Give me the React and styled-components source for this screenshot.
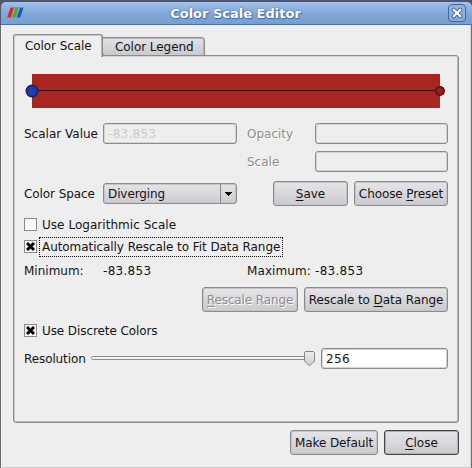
import React from "react";
import styled, { createGlobalStyle, css } from "styled-components";

const GlobalStyle = createGlobalStyle`
  * { box-sizing: border-box; }
  html, body { margin: 0; padding: 0; overflow: hidden; background: #4d5571; }
`;

const Window = styled.div`
  width: 472px;
  height: 468px;
  padding-top: 2px;
  background: #4d5571;
  font-family: "DejaVu Sans", sans-serif;
  font-size: 12px;
  line-height: 14px;
  color: #141414;
  white-space: nowrap;
`;

const TitleBar = styled.header`
  height: 23px;
  display: grid;
  grid-template-columns: 24px 1fr 24px;
  align-items: center;
  padding: 0 0 0 6px;
  margin-left: 1px;
  border-radius: 5px 5px 0 0;
  border-bottom: 1px solid #4a70a8;
  background: linear-gradient(#a4c2ec 0, #95b6e2 20%, #7fa4d6 60%, #799fd1 100%);
`;

const Title = styled.h1`
  margin: 1px 0 0 -8px;
  text-align: center;
  font-size: 13px;
  line-height: 16px;
  font-weight: bold;
  color: #fff;
  text-shadow: 0 0 1px #456fa8, 1px 1px 1px #456fa8, 0 0 2px #5b84bd;
`;

const CloseBox = styled.button`
  width: 18px;
  height: 18px;
  padding: 0;
  display: grid;
  place-items: center;
  border: 1px solid #3f6698;
  border-radius: 4px;
  background: linear-gradient(#94b7e3, #7da5d8);
  box-shadow: inset 0 0 0 1px #8fb2e0;
`;

const Body = styled.main`
  height: 443px;
  padding: 9px 12px 0 11px;
  background: #eeeeee;
  border-left: 1px solid #6e6969;
  border-right: 1px solid #6f6f6f;
  box-shadow: inset 1px 0 #f8f4f2, inset -1px 0 #d5d3d0, inset 0 -1px #c9c9c9;
`;

const TabList = styled.div`
  display: flex;
  align-items: flex-start;
  height: 22px;
  padding-left: 1px;
  margin-bottom: -1px;
`;

const Tab = styled.div`
  display: flex;
  border: 1px solid #8b8b8b;
  ${(p) =>
    p.$active
      ? css`
          width: 90px;
          height: 23px;
          padding: 4px 0 0 11px;
          border-bottom: 0;
          border-radius: 3px 3px 0 0;
          background: #eeeeee;
          box-shadow: inset 1px 1px #c9c9c9, inset -1px 0 #b5b5b5;
          z-index: 1;
        `
      : css`
          width: 103px;
          height: 19px;
          margin: 3px 0 0 -1px;
          padding: 2px 0 0 12px;
          border-radius: 0 3px 0 3px;
          background: linear-gradient(#e2e2e8, #c9c9ce);
          box-shadow: inset -1px 1px #b9b9bb;
        `}
`;

const Panel = styled.section`
  width: 446px;
  height: 368px;
  margin-left: 1px;
  padding: 18px 10px 0;
  border: 1px solid #8b8b8b;
  border-radius: 0 3px 3px 3px;
  box-shadow: inset 1px 0 #c9c9c9, inset -1px -1px #b9b9b9, inset 0 1px #d4d4d4;
`;

const Ramp = styled.svg`
  display: block;
  width: 424px;
  height: 34px;
  overflow: visible;
`;

const Row = styled.div`
  display: flex;
  align-items: center;
  height: ${(p) => p.$h}px;
  margin-top: ${(p) => p.$top || 0}px;
`;

const ButtonGroup = styled.div`
  display: flex;
  gap: 6px;
  margin-left: auto;
`;

const FormGrid = styled.div`
  display: grid;
  grid-template-columns: 79px 134px 10px 68px 133px;
  grid-auto-rows: 21px;
  row-gap: 7px;
  align-items: center;
  margin-top: 15px;
`;

const Text = styled.span`
  display: block;
  letter-spacing: ${(p) => p.$track || 0}px;
  ${(p) => p.$off && "color: #8d8d8d; text-shadow: 1px 1px #fff;"}
  ${(p) => p.$w && `width: ${p.$w}px;`}
  ${(p) => p.$col && `grid-column: ${p.$col};`}
`;

const Key = styled.span`
  text-decoration: underline;
  text-decoration-thickness: 1px;
  text-underline-offset: 2px;
  text-decoration-skip-ink: none;
`;

const Field = styled.div`
  width: ${(p) => p.$w}px;
  height: 21px;
  padding: 3px 4px;
  border: 1px solid #8b8b8b;
  border-radius: 3px;
  grid-column: ${(p) => p.$col || "auto"};
  background: ${(p) => (p.$live ? "#fff" : "#eeeeee")};
  color: ${(p) => (p.$live ? "#141414" : "#c9c9c9")};
  box-shadow: inset 0 0 0 1px #d4d4d4;
`;

const Combo = styled.div`
  width: 134px;
  height: 21px;
  display: grid;
  grid-template-columns: 1fr 16px;
  border: 1px solid #8b8b8b;
  border-radius: 3px;
  background: linear-gradient(#e3e3e8, #cbcbd0);
  box-shadow: inset 0 0 0 1px #c5c5c8;
  & > ${Text} { padding: 3px 0 0 4px; }
`;

const ComboArrow = styled.div`
  display: grid;
  place-items: center;
  border-left: 1px solid #8b8b8b;
`;

const Button = styled.button`
  width: ${(p) => p.$w}px;
  height: 25px;
  padding: 0;
  display: flex;
  align-items: center;
  justify-content: center;
  font: inherit;
  color: inherit;
  border: 1px solid ${(p) => (p.$primary ? "#444" : "#8b8b8b")};
  border-radius: 3px;
  background: linear-gradient(#e5e5ea, #c9c9ce);
  box-shadow: inset 0 0 0 1px ${(p) => (p.$primary ? "#b0b0b4" : "#c5c5c9")};
`;

const Box = styled.div`
  width: 13px;
  height: 13px;
  margin-right: ${(p) => (p.$focus ? 2 : 5)}px;
  margin-bottom: ${(p) => (p.$focus ? 1 : 0)}px;
  display: grid;
  place-items: center;
  border: 1px solid #8b8b8b;
  background: linear-gradient(135deg, #f1f1f1, #fff);
`;

const Focus = styled.div`
  width: 244px;
  height: 20px;
  padding: 2px 0 0 2px;
  border: 1px dotted #111;
`;

const Slider = styled.svg`
  display: block;
  width: 225px;
  height: 21px;
  margin-right: 5px;
`;

const Footer = styled.footer`
  display: flex;
  justify-content: flex-end;
  gap: 6px;
  margin-top: 7px;
`;

const Logo = () => (
  <svg width="17" height="12" viewBox="0 0 17 12">
    <path d="M3.300 1h3.500L3.700 10.500H.2z" fill="#ed1c24" />
    <path d="M8.100 1h3.500L8.500 10.500H5z" fill="#43b512" />
    <path d="M12.800 1h3.500L13.200 10.500H9.700z" fill="#1850d8" />
    <path d="M3.300.5h13" stroke="#706e78" opacity=".55" />
  </svg>
);

const CloseGlyph = () => (
  <svg width="12" height="12" viewBox="0 0 12 12" strokeLinecap="round">
    <path d="M2.700 2.700l6.600 6.600M9.300 2.700l-6.600 6.600" stroke="#42699d" strokeWidth="4" />
    <path d="M2.700 2.700l6.600 6.600M9.300 2.700l-6.600 6.600" stroke="#fff" strokeWidth="2.200" />
  </svg>
);

const Check = () => (
  <svg width="9" height="9" viewBox="0 0 9 9">
    <path d="M1 1l7 7M8 1L1 8" stroke="#000" strokeWidth="2.9" />
  </svg>
);

const CheckBox = ({ checked, focus }) => <Box $focus={focus}>{checked && <Check />}</Box>;

export default function App() {
  return (
    <Window>
      <GlobalStyle />
      <TitleBar>
        <Logo />
        <Title>Color Scale Editor</Title>
        <CloseBox aria-label="Close window"><CloseGlyph /></CloseBox>
      </TitleBar>
      <Body>
        <TabList>
          <Tab $active><Text $track={-0.08}>Color Scale</Text></Tab>
          <Tab><Text $track={-0.05}>Color Legend</Text></Tab>
        </TabList>
        <Panel>
          <Ramp viewBox="0 0 424 34">
            <defs>
              <radialGradient id="low"><stop offset="0" stopColor="#2440b4" /><stop offset=".7" stopColor="#1d36a0" /><stop offset="1" stopColor="#0c1648" /></radialGradient>
              <radialGradient id="high"><stop offset="0" stopColor="#a82020" /><stop offset=".65" stopColor="#8e1a1a" /><stop offset="1" stopColor="#3c0a0a" /></radialGradient>
            </defs>
            <rect x="8" width="408" height="34" fill="#aa2420" />
            <path d="M8 16.5h408" stroke="#3d0c0b" />
            <circle cx="8" cy="17" r="6.5" fill="url(#low)" />
            <circle cx="416" cy="17" r="5" fill="url(#high)" />
          </Ramp>
          <FormGrid>
            <Text>Scalar Value</Text>
            <Field $w={134}><Text $track={0.3}>-83.853</Text></Field>
            <Text $off $col={4}>Opacity</Text>
            <Field $w={133} $col={5} />
            <Text $off $col={4}>Scale</Text>
            <Field $w={133} $col={5} />
          </FormGrid>
          <Row $h={25} $top={9}>
            <Text $w={79} $track={-0.08}>Color Space</Text>
            <Combo>
              <Text $track={-0.1}>Diverging</Text>
              <ComboArrow>
                <svg width="7" height="4" viewBox="0 0 7 4" shapeRendering="crispEdges"><path d="M0 0h7v1H6v1H5v1H4v1H3V3H2V2H1V1H0z" /></svg>
              </ComboArrow>
            </Combo>
            <ButtonGroup>
              <Button $w={75}><Text><Key>S</Key>ave</Text></Button>
              <Button $w={94}><Text $track={-0.1}>Choose <Key>P</Key>reset</Text></Button>
            </ButtonGroup>
          </Row>
          <Row $h={13} $top={12}>
            <CheckBox />
            <Text $track={0.04}>Use Logarithmic Scale</Text>
          </Row>
          <Row $h={20} $top={6}>
            <CheckBox checked focus />
            <Focus><Text $track={-0.06}>Automatically Rescale to Fit Data Range</Text></Focus>
          </Row>
          <Row $h={14} $top={7}>
            <Text $w={79}>Minimum:</Text>
            <Text $w={144} $track={0.3}>-83.853</Text>
            <Text $w={68} $track={0.1}>Maximum:</Text>
            <Text $track={0.3}>-83.853</Text>
          </Row>
          <Row $h={25} $top={9}>
            <ButtonGroup>
              <Button $w={96}><Text $off $track={-0.12}><Key>R</Key>escale Range</Text></Button>
              <Button $w={144}><Text $track={-0.08}>Rescale to <Key>D</Key>ata Range</Text></Button>
            </ButtonGroup>
          </Row>
          <Row $h={13} $top={12}>
            <CheckBox checked />
            <Text $track={-0.09}>Use Discrete Colors</Text>
          </Row>
          <Row $h={21} $top={11}>
            <Text $w={67} $track={-0.1}>Resolution</Text>
            <Slider viewBox="0 0 225 21">
              <defs><linearGradient id="thumb" x2="0" y2="1"><stop stopColor="#eeeef2" /><stop offset="1" stopColor="#cdcdd2" /></linearGradient></defs>
              <rect x=".5" y="8.5" width="215" height="3" rx="1" fill="#f2f2f2" stroke="#8b8b8b" />
              <path d="M214.500 3.500h8l1 1v8.500l-4.500 4.500h-1L213.500 13V4.500z" fill="url(#thumb)" stroke="#858585" />
            </Slider>
            <Field $w={127} $live><Text $track={0.4}>256</Text></Field>
          </Row>
        </Panel>
        <Footer>
          <Button $w={88}><Text $track={-0.1}>Make Default</Text></Button>
          <Button $w={75} $primary><Text><Key>C</Key>lose</Text></Button>
        </Footer>
      </Body>
    </Window>
  );
}
